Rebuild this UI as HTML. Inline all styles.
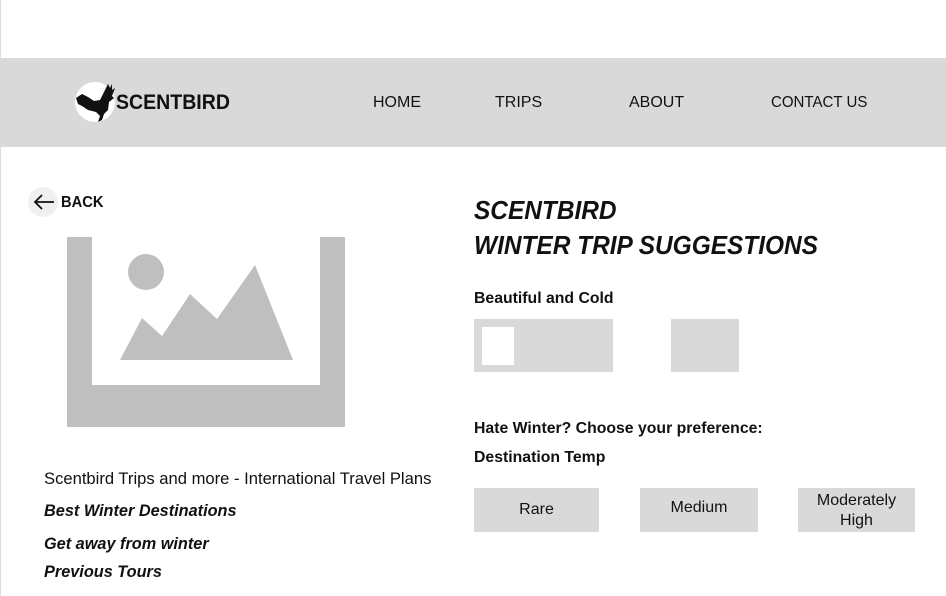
<!DOCTYPE html>
<html><head><meta charset="utf-8">
<style>
*{margin:0;padding:0;box-sizing:border-box}
body{width:946px;height:596px;background:#fff;position:relative;overflow:hidden;font-family:"Liberation Sans",sans-serif;color:#111}
.a{position:absolute;white-space:nowrap}
.hdr{position:absolute;left:0;top:58px;width:946px;height:89px;background:#d9d9d9}
.nav{font-size:16px;top:94px;letter-spacing:0px}
.btn{position:absolute;background:#d9d9d9;text-align:center;font-size:16px}
.b{font-weight:bold}
.i{font-style:italic}
.c{display:inline-block;transform:scaleX(0.92);transform-origin:left}
</style></head><body>
<div style="position:absolute;left:0;top:0;width:1px;height:596px;background:#ddd"></div>
<div class="hdr"></div>
<svg class="a" style="left:74px;top:80px" width="46" height="46" viewBox="0 0 46 46">
<circle cx="21" cy="22" r="20" fill="#fff"/>
<path d="M2 18 L8 14 L14 17 L20 21 L26 20 L30 12 L34 4 L36 8 L38 4 L38 10 L41 8 L38 16 L40 18 L35 22 L34 30 L30 34 L28 40 L24 42 L26 36 L22 32 L14 30 L8 26 L4 24 Z" fill="#111"/>
</svg>
<div class="a b" style="left:116px;top:91px;font-size:21px"><span class="c" style="transform:scaleX(0.93)">SCENTBIRD</span></div>
<div class="a nav" style="left:373px">HOME</div>
<div class="a nav" style="left:495px">TRIPS</div>
<div class="a nav" style="left:629px">ABOUT</div>
<div class="a nav" style="left:771px"><span class="c" style="transform:scaleX(0.94)">CONTACT US</span></div>

<div class="a" style="left:28px;top:187px;width:30px;height:30px;border-radius:50%;background:#f0f0f0"></div>
<svg class="a" style="left:33px;top:193px" width="22" height="18" viewBox="0 0 22 18"><path d="M21 9 H2 M9 2 L2 9 L9 16" stroke="#111" stroke-width="1.8" fill="none"/></svg>
<div class="a b" style="left:61px;top:194px;font-size:16px"><span class="c">BACK</span></div>

<div class="a" style="left:67px;top:237px;width:278px;height:190px;background:#bfbfbf"></div>
<div class="a" style="left:92px;top:237px;width:228px;height:148px;background:#fff"></div>
<svg class="a" style="left:0;top:0" width="400" height="400"><circle cx="146" cy="272" r="18" fill="#bfbfbf"/><polygon points="120,360 142,318 162,336 190,294 217,319 255,265 293,360" fill="#bfbfbf"/></svg>

<div class="a" style="left:44px;top:469px;font-size:16.6px">Scentbird Trips and more - International Travel Plans</div>
<div class="a b i" style="left:44px;top:502px;font-size:16.3px">Best Winter Destinations</div>
<div class="a b i" style="left:44px;top:535px;font-size:16.3px">Get away from winter</div>
<div class="a b i" style="left:44px;top:563px;font-size:16.3px">Previous Tours</div>

<div class="a b i" style="left:474px;top:193px;font-size:26px;line-height:35px"><span class="c" style="transform:scaleX(0.94)">SCENTBIRD<br>WINTER TRIP SUGGESTIONS</span></div>
<div class="a b" style="left:474px;top:290px;font-size:15.8px">Beautiful and Cold</div>
<div class="a" style="left:474px;top:319px;width:139px;height:53px;background:#d9d9d9"></div>
<div class="a" style="left:482px;top:327px;width:32px;height:38px;background:#fff"></div>
<div class="a" style="left:671px;top:319px;width:68px;height:53px;background:#d9d9d9"></div>
<div class="a b" style="left:474px;top:420px;font-size:15.8px">Hate Winter? Choose your preference:</div>
<div class="a b" style="left:474px;top:449px;font-size:15.8px">Destination Temp</div>
<div class="btn" style="left:474px;top:488px;width:125px;height:44px;line-height:44px">Rare</div>
<div class="btn" style="left:640px;top:488px;width:118px;height:44px;line-height:40px">Medium</div>
<div class="btn" style="left:798px;top:488px;width:117px;height:44px;line-height:20px;padding-top:3px">Moderately<br>High</div>
</body></html>
